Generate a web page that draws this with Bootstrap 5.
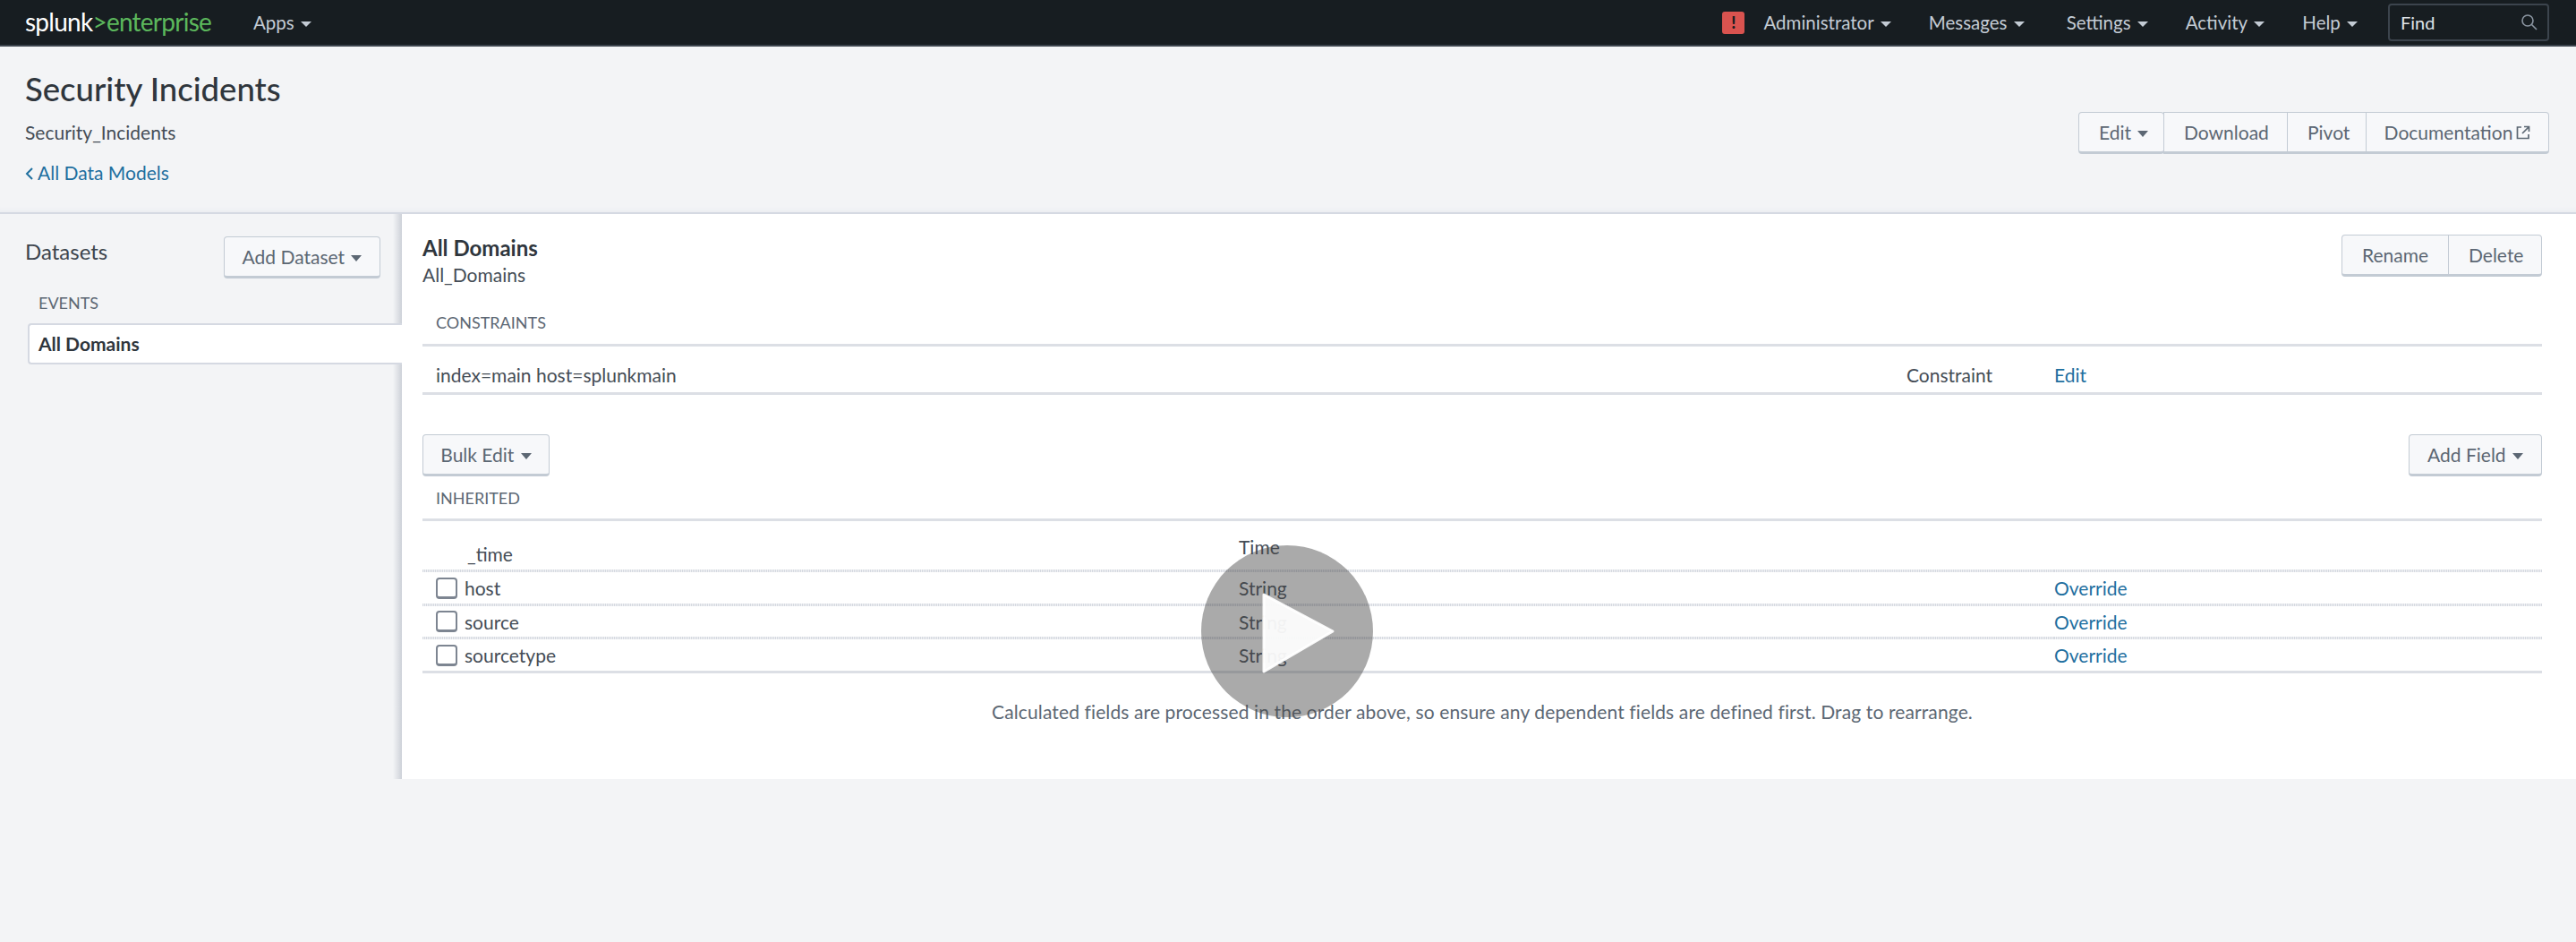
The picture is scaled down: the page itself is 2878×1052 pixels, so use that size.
<!DOCTYPE html>
<html lang="en">
<head>
<meta charset="utf-8">
<title>Security Incidents</title>
<link href="https://cdn.jsdelivr.net/npm/bootstrap@5.3.0/dist/css/bootstrap.min.css" rel="stylesheet">
<style>
html,body{height:1052px;overflow:hidden}
body{background:#f3f4f6;color:#454d56;font-family:Lato,"Liberation Sans",sans-serif;font-size:21px;line-height:1.2;position:relative}
a{color:#1f6f9f;text-decoration:none}
.dropdown-toggle::after{border-top-width:.34em;border-left-width:.3em;border-right-width:.3em;margin-left:.35em;vertical-align:.14em}
.topbar{height:52px;background:#171d21;border-bottom:2px solid #3c444d;padding:0 30px 0 28px;flex-wrap:nowrap}
.brand{font-size:28px;letter-spacing:-.75px;color:#fff;margin-right:50px;width:205px;white-space:nowrap}
.brand em{font-style:normal;color:#5cb85c}
.navitem{color:#c3cbd4;font-size:20.5px;white-space:nowrap}
.navitem:hover{color:#fff}
.navright{gap:42px}
.nav-msg{margin-right:5px}
.alertbox{width:25px;height:25px;background:#d9534f;color:#171d21;border-radius:3px;font-weight:900;font-size:18px;line-height:25px;text-align:center;margin-right:-21px}
.findbox{width:180px;height:42px;border:2px solid #3c444d;border-radius:4px;background:#171d21;color:#dfe3e8;font-size:20px;padding:0 10px 0 12px;margin-left:-8px}
.pagehead{height:187px;padding:0 30px 0 28px;border-bottom:2px solid #d5d9e2;box-shadow:inset 0 -6px 6px -6px #e3e6ec}
.pagetitle{font-size:36.5px;font-weight:500;margin:0;line-height:42px;padding-top:26px;color:#2f363d}
.sub1{margin-top:15px;line-height:25px}
.sub2{margin-top:20px;line-height:25px}
.chev{margin-right:4px;vertical-align:-1px}
.headbtns{margin-top:73px}
.skbtn{--bs-btn-color:#5c6773;--bs-btn-bg:#f7f8fa;--bs-btn-border-color:#c3cbd4;--bs-btn-hover-bg:#eef0f3;--bs-btn-hover-color:#3c444d;--bs-btn-hover-border-color:#c3cbd4;--bs-btn-font-size:21px;--bs-btn-padding-x:22px;--bs-btn-padding-y:0;--bs-btn-border-radius:4px;height:47px;line-height:43px;border-bottom-width:3px;white-space:nowrap}
.docbtn{padding:0}
.docbtn svg{flex:none}
.shell{height:631px}
.sidepane{width:449px;flex:none;padding:25px 0 0 28px;background:linear-gradient(to right,transparent,#cdd1d8) right top/10px 100% no-repeat}
.sidetitle{font-size:24px;line-height:34px;color:#3c444d}
.add-ds{margin-right:24px;width:175px;padding:0;text-align:center}
.grouplabel{font-size:18px;color:#5c6773;margin:15px 0 0 15px;line-height:24px}
.sideitem{margin:11px 0 0 3px;height:46px;line-height:42px;padding-left:10px;background:#fff;border:2px solid #d5d9e2;border-right:0;border-radius:4px 0 0 4px;font-weight:700;color:#2f363d}
.mainpane{background:#fff;flex:1;padding:23px 38px 0 23px}
.ds-name{font-size:24px;font-weight:700;line-height:30px;color:#2f363d;margin:0}
.ds-id{line-height:30px;color:#454d56}
.seclabel{font-size:18px;color:#5c6773;padding-left:15px;line-height:24px}
.constraint-label{margin-top:26px;height:39px;border-bottom:3px solid #dcdfe5;line-height:24px}
.rowline{height:54px;border-bottom:3px solid #dcdfe5;padding:12px 0 0 15px}
.col-main{width:1643px}
.col-kind{width:165px}
.fieldbar{margin-top:44px}
.inh-label{margin-top:12px;height:38px;border-bottom:3px solid #dcdfe5}
.ftable{width:100%;table-layout:fixed;margin:0;--bs-table-bg:transparent;--bs-table-color:#454d56}
.ftable>tbody>tr>td{padding:0 0 2px;border-bottom:0;height:37.5px;vertical-align:middle;background:repeating-linear-gradient(90deg,#d5d9e0 0 1px,#f0f1f4 1px 2px) left bottom/100% 3px no-repeat}
.ftable>tbody>tr:last-child>td{background:linear-gradient(#dcdfe5,#dcdfe5) left bottom/100% 3px no-repeat}
.ftable>tbody>tr.first>td{height:57px}
.ftable>tbody>tr>td.c-name{width:912px;padding-left:15px}
.ftable>tbody>tr>td.c-type{width:911px}
.ftable>tbody>tr>td.firstname{padding:17px 0 0 50px}
.ftable>tbody>tr>td.firsttype{padding-top:3px}
.cb{width:24px;height:24px;border:2px solid #7d8591;border-bottom-width:3px;border-radius:4px;background:#fff;margin:0;appearance:none;flex:none}
.notecalc{text-align:center;margin-top:30px;color:#5c6773;letter-spacing:.12px}
.playbtn{position:absolute;left:1342px;top:609px;width:192px;height:192px;border-radius:50%;background:rgba(70,70,70,.46)}
.playbtn svg{position:absolute;left:0;top:0}
</style>
</head>
<body>
<nav class="topbar navbar d-flex align-items-center justify-content-between">
  <div class="d-flex align-items-center">
    <a class="brand" href="#">splunk<em>&gt;enterprise</em></a>
    <a class="navitem dropdown-toggle" href="#">Apps</a>
  </div>
  <div class="d-flex align-items-center navright">
    <span class="alertbox">!</span>
    <a class="navitem dropdown-toggle" href="#">Administrator</a>
    <a class="navitem dropdown-toggle nav-msg" href="#">Messages</a>
    <a class="navitem dropdown-toggle" href="#">Settings</a>
    <a class="navitem dropdown-toggle" href="#">Activity</a>
    <a class="navitem dropdown-toggle" href="#">Help</a>
    <div class="findbox d-flex align-items-center justify-content-between">
      <span>Find</span>
      <svg width="20" height="20" viewBox="0 0 20 20" fill="none" stroke="#8b95a1" stroke-width="1.6"><circle cx="8" cy="8" r="6"/><path d="M12.5 12.5 18 18"/></svg>
    </div>
  </div>
</nav>

<header class="pagehead d-flex justify-content-between">
  <div>
    <h1 class="pagetitle">Security Incidents</h1>
    <div class="sub1">Security_Incidents</div>
    <div class="sub2"><a href="#"><svg class="chev" width="10" height="16" viewBox="0 0 10 16" fill="none" stroke="#1f6f9f" stroke-width="2"><path d="M8 2 2 8l6 6"/></svg>All Data Models</a></div>
  </div>
  <div class="btn-group headbtns align-self-start">
    <button class="btn skbtn dropdown-toggle" style="width:96px">Edit</button>
    <button class="btn skbtn" style="width:139px">Download</button>
    <button class="btn skbtn" style="width:89px">Pivot</button>
    <button class="btn skbtn docbtn d-flex align-items-center justify-content-center gap-1" style="width:205px">Documentation
      <svg width="16" height="16" viewBox="0 0 16 16" fill="none" stroke="#5c6773" stroke-width="1.7"><path d="M6 2H1.5v12.5h12.5V10M9 1.5h5.5V7M14.5 1.5 7 9"/></svg>
    </button>
  </div>
</header>

<div class="shell d-flex">
  <aside class="sidepane">
    <div class="d-flex justify-content-between align-items-start">
      <div class="sidetitle">Datasets</div>
      <button class="btn skbtn dropdown-toggle add-ds">Add Dataset</button>
    </div>
    <div class="grouplabel">EVENTS</div>
    <div class="sideitem">All Domains</div>
  </aside>
  <main class="mainpane">
    <div class="d-flex justify-content-between align-items-start">
      <div>
        <h2 class="ds-name">All Domains</h2>
        <div class="ds-id">All_Domains</div>
      </div>
      <div class="btn-group">
        <button class="btn skbtn" style="width:120px">Rename</button>
        <button class="btn skbtn" style="width:105px">Delete</button>
      </div>
    </div>
    <div class="seclabel constraint-label">CONSTRAINTS</div>
    <div class="rowline d-flex align-items-center">
      <div class="col-main">index=main host=splunkmain</div>
      <div class="col-kind">Constraint</div>
      <a href="#">Edit</a>
    </div>
    <div class="fieldbar d-flex justify-content-between">
      <button class="btn skbtn dropdown-toggle" style="width:142px;padding:0">Bulk Edit</button>
      <button class="btn skbtn dropdown-toggle" style="width:149px;padding:0">Add Field</button>
    </div>
    <div class="seclabel inh-label">INHERITED</div>
    <table class="table ftable">
      <tbody>
        <tr class="first"><td class="c-name firstname">_time</td><td class="c-type firsttype">Time</td><td></td></tr>
        <tr><td class="c-name"><div class="d-flex align-items-center gap-2"><input class="cb" type="checkbox" aria-label="host"><span>host</span></div></td><td class="c-type">String</td><td><a href="#">Override</a></td></tr>
        <tr><td class="c-name"><div class="d-flex align-items-center gap-2"><input class="cb" type="checkbox" aria-label="source"><span>source</span></div></td><td class="c-type">String</td><td><a href="#">Override</a></td></tr>
        <tr><td class="c-name"><div class="d-flex align-items-center gap-2"><input class="cb" type="checkbox" aria-label="sourcetype"><span>sourcetype</span></div></td><td class="c-type">String</td><td><a href="#">Override</a></td></tr>
      </tbody>
    </table>
    <p class="notecalc">Calculated fields are processed in the order above, so ensure any dependent fields are defined first. Drag to rearrange.</p>
  </main>
</div>

<div class="playbtn">
  <svg width="192" height="192" viewBox="0 0 192 192"><path d="M70 55 L147 96 L70 141 Z" fill="#fff" fill-opacity=".93" stroke="#fff" stroke-opacity=".93" stroke-width="3" stroke-linejoin="round"/></svg>
</div>
<script src="https://cdn.jsdelivr.net/npm/bootstrap@5.3.0/dist/js/bootstrap.bundle.min.js"></script>
</body>
</html>
